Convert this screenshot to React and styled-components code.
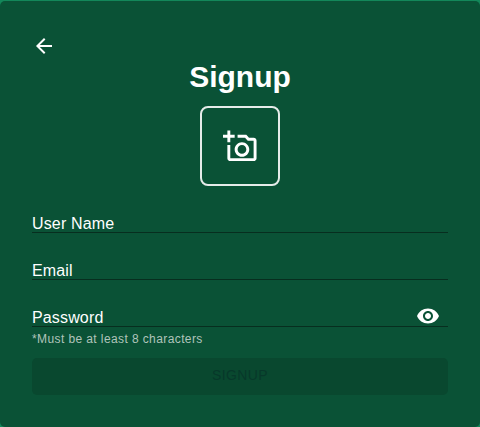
import React from "react";
import styled, { createGlobalStyle } from "styled-components";

const GlobalStyle = createGlobalStyle`
  *, *::before, *::after { box-sizing: border-box; }
  body {
    margin: 0;
    background: #13875a;
    font-family: "Liberation Sans", Arial, sans-serif;
    color: #fff;
    overflow: hidden;
  }
`;

const Card = styled.form`
  display: flex;
  flex-direction: column;
  height: 426px;
  margin-top: 1px;
  padding: 33px 32px 32px;
  border-radius: 5px;
  background: #0a5236;
`;

const Icon = styled.svg`
  display: block;
  flex: none;
  width: ${(p) => p.$size}px;
  height: ${(p) => p.$size}px;
  fill: #fff;
`;

const IconButton = styled.button`
  display: flex;
  align-self: flex-start;
  margin-top: ${(p) => p.$lift || 0}px;
  padding: 0;
  border: 0;
  background: none;
  cursor: pointer;
`;

const Title = styled.h1`
  margin: 1px 0 0;
  font-size: 30px;
  line-height: 36px;
  font-weight: 700;
  text-align: center;
`;

const PhotoPicker = styled.button`
  display: flex;
  align-items: center;
  justify-content: center;
  align-self: center;
  width: 80px;
  height: 80px;
  margin: 11px 0 27px;
  padding: 0;
  border: 2px solid #e6ebe9;
  border-radius: 8px;
  background: none;
  cursor: pointer;
`;

const Field = styled.label`
  display: flex;
  align-items: flex-start;
  justify-content: space-between;
  height: 20px;
  margin-bottom: ${(p) => p.$gap}px;
  padding-right: 8px;
  border-bottom: 1px solid #072e1f;
  font-family: Helvetica, "Liberation Sans", Arial, sans-serif;
  font-size: 16px;
  line-height: 21px;
  letter-spacing: 0.15px;
`;

const Hint = styled.small`
  font-family: Helvetica, "Liberation Sans", Arial, sans-serif;
  font-size: 12px;
  line-height: 20px;
  letter-spacing: 0.4px;
  color: #b0c4bb;
`;

const SubmitButton = styled.button`
  height: 37px;
  margin-top: 9px;
  padding: 0 0 3px;
  border: 0;
  border-radius: 5px;
  background: #09482f;
  color: #07382a;
  font: 500 14px/24px Helvetica, "Liberation Sans", Arial, sans-serif;
  letter-spacing: 0.4px;
  text-transform: uppercase;
`;

export default function App() {
  return (
    <>
      <GlobalStyle />
      <Card>
        <IconButton type="button" aria-label="Back">
          <Icon $size={24} viewBox="0 0 24 24">
            <path d="M20 11H7.83l5.59-5.59L12 4l-8 8 8 8 1.41-1.41L7.83 13H20v-2z" />
          </Icon>
        </IconButton>
        <Title>Signup</Title>
        <PhotoPicker type="button" aria-label="Add photo">
          <Icon $size={35} viewBox="0 0 24 24">
            <path d="M21 6h-3.17L16 4h-6v2h5.12l1.83 2H21v12H5v-9H3v9c0 1.1.9 2 2 2h16c1.1 0 2-.9 2-2V8c0-1.1-.9-2-2-2zM8 14c0 2.76 2.24 5 5 5s5-2.24 5-5-2.24-5-5-5-5 2.24-5 5zm5-3c1.65 0 3 1.35 3 3s-1.35 3-3 3-3-1.35-3-3 1.35-3 3-3zM5 6h3V4H5V1H3v3H0v2h3v3h2z" />
          </Icon>
        </PhotoPicker>
        <Field $gap={27}>User Name</Field>
        <Field $gap={27}>Email</Field>
        <Field $gap={2}>
          Password
          <IconButton type="button" aria-label="Show password" $lift={-3}>
            <Icon $size={24} viewBox="0 0 24 24">
              <path d="M12 4.5C7 4.5 2.73 7.61 1 12c1.73 4.39 6 7.5 11 7.5s9.27-3.11 11-7.5c-1.73-4.39-6-7.5-11-7.5zM12 17c-2.76 0-5-2.24-5-5s2.24-5 5-5 5 2.24 5 5-2.24 5-5 5zm0-8c-1.66 0-3 1.34-3 3s1.34 3 3 3 3-1.34 3-3-1.34-3-3-3z" />
            </Icon>
          </IconButton>
        </Field>
        <Hint>*Must be at least 8 characters</Hint>
        <SubmitButton disabled>Signup</SubmitButton>
      </Card>
    </>
  );
}
